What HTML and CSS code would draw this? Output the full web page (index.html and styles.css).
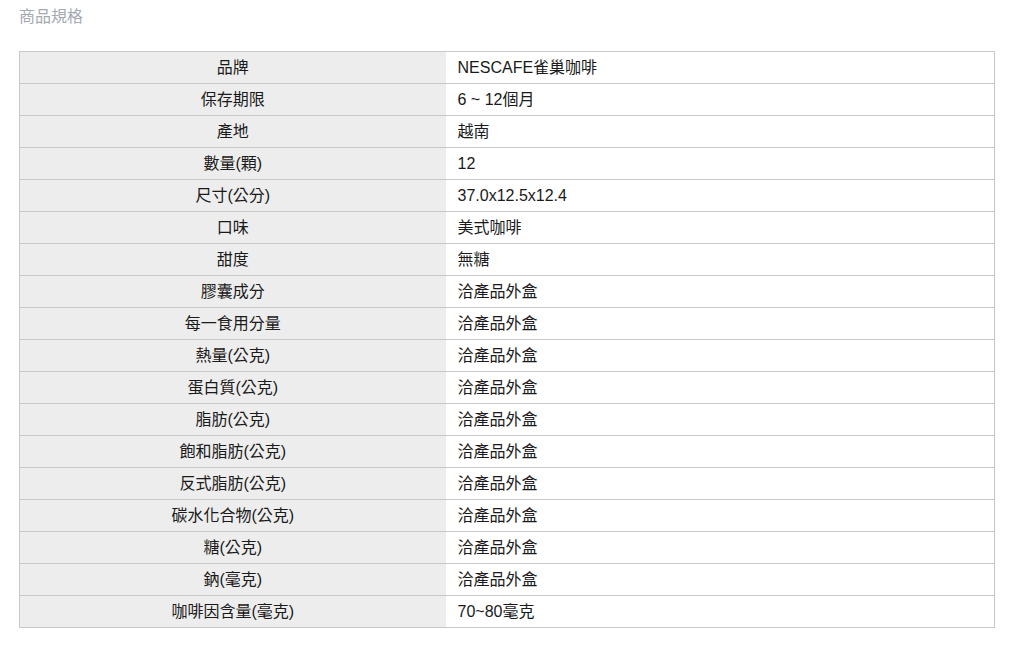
FILE: index.html
```html
<!DOCTYPE html>
<html lang="zh-Hant">
<head>
<meta charset="utf-8">
<link rel="stylesheet" href="styles.css">
</head>
<body>
<div class="wrap">
  <div class="title">商品規格</div>
  <table class="spec">
    <tbody>
      <tr><th>品牌</th><td>NESCAFE雀巢咖啡</td></tr>
      <tr><th>保存期限</th><td>6 ~ 12個月</td></tr>
      <tr><th>產地</th><td>越南</td></tr>
      <tr><th>數量(顆)</th><td>12</td></tr>
      <tr><th>尺寸(公分)</th><td>37.0x12.5x12.4</td></tr>
      <tr><th>口味</th><td>美式咖啡</td></tr>
      <tr><th>甜度</th><td>無糖</td></tr>
      <tr><th>膠囊成分</th><td>洽產品外盒</td></tr>
      <tr><th>每一食用分量</th><td>洽產品外盒</td></tr>
      <tr><th>熱量(公克)</th><td>洽產品外盒</td></tr>
      <tr><th>蛋白質(公克)</th><td>洽產品外盒</td></tr>
      <tr><th>脂肪(公克)</th><td>洽產品外盒</td></tr>
      <tr><th>飽和脂肪(公克)</th><td>洽產品外盒</td></tr>
      <tr><th>反式脂肪(公克)</th><td>洽產品外盒</td></tr>
      <tr><th>碳水化合物(公克)</th><td>洽產品外盒</td></tr>
      <tr><th>糖(公克)</th><td>洽產品外盒</td></tr>
      <tr><th>鈉(毫克)</th><td>洽產品外盒</td></tr>
      <tr><th>咖啡因含量(毫克)</th><td>70~80毫克</td></tr>
    </tbody>
  </table>
</div>
</body>
</html>
```
FILE: styles.css
```css
html, body {
  margin: 0;
  padding: 0;
  background: #fff;
}
body {
  font-family: "Liberation Sans", Arial, "Noto Sans CJK TC", sans-serif;
  color: #1a1a1a;
}
.wrap {
  padding: 6px 0 0 19px;
}
.title {
  font-size: 16px;
  line-height: 22px;
  color: #a4a9b2;
  height: 45px;
}
.spec {
  width: 976px;
  border-collapse: collapse;
  border: 1px solid #c8c8c8;
  font-size: 16px;
}
.spec tr {
  border-bottom: 1px solid #c8c8c8;
}
.spec th,
.spec td {
  height: 32px;
  padding: 0;
  box-sizing: border-box;
  line-height: 18px;
  vertical-align: middle;
}
.spec th {
  width: 426px;
  background: #ededed;
  font-weight: normal;
  text-align: center;
}
.spec td {
  text-align: left;
  padding-left: 12px;
}
```
